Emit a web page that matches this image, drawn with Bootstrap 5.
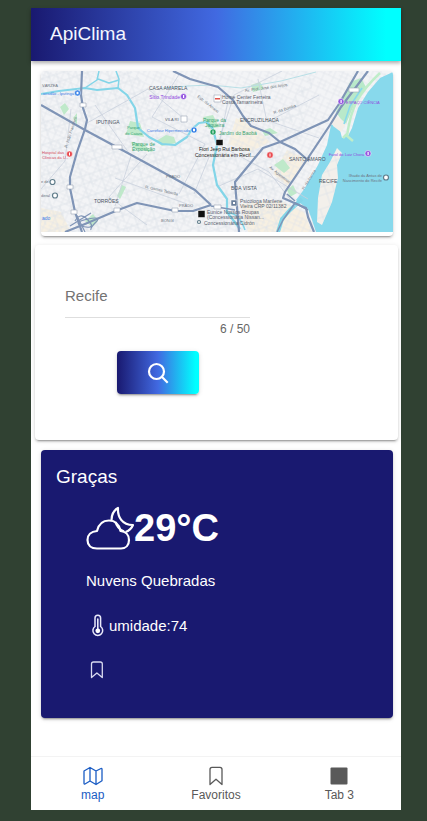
<!DOCTYPE html>
<html lang="pt-BR">
<head>
<meta charset="utf-8">
<meta name="viewport" content="width=device-width, initial-scale=1">
<title>ApiClima</title>
<link href="https://cdn.jsdelivr.net/npm/bootstrap@5.3.0/dist/css/bootstrap.min.css" rel="stylesheet">
<style>
:root{--night:#191970;--sweep:linear-gradient(90deg,#191970,#4169e1 50%,#00ffff 96%);--lift:0 3px 1px -2px rgba(0,0,0,.2),0 2px 2px rgba(0,0,0,.14),0 1px 5px rgba(0,0,0,.12)}
body{background:#304132;font-family:"Liberation Sans",Arial,sans-serif;font-size:15px;line-height:20px;color:#222}
.shell{min-height:100vh;padding:8px 26px 11px 31px}
.app-bar{background:var(--sweep);padding:16px 19px 17px;box-shadow:0 2px 4px rgba(0,0,0,.35);z-index:1}
.app-title{font-size:19px;line-height:20px;color:#f4f6ff}
.panel{border:0;border-radius:4px;box-shadow:var(--lift)}
.map-panel{margin:10px 8px 0 10px;padding-bottom:4px}
.map-panel svg{width:100%;height:auto;border-radius:4px 4px 0 0}
.search-panel{margin:9px 3px 0 4px;padding:38px 30px 46px}
.search-form{width:185px}
.city-input{border:0;border-bottom:1px solid #dedede;border-radius:0;padding:0 0 10px;height:35px;line-height:24px;font-size:15px;color:#737373;width:100%;background:transparent}
.counter{font-size:12px;line-height:16px;color:#666;margin-top:3px}
.search-btn{background:var(--sweep);width:82px;height:43px;padding:0;border:0;border-radius:4px;box-shadow:var(--lift);margin-top:14px}
.weather{background:var(--night);color:#fff;margin:10px 8px 0 10px;padding:16px 15px 38px}
.weather h2{font-size:19px;line-height:22px}
.details{padding-left:30px}
.temp{font-size:38px;line-height:48px}
.now{margin-top:16px}
.sky{margin-top:17px;line-height:24px}
.humid{margin-top:21px;line-height:24px}
.save{margin-top:22px;height:20px;line-height:1}
.tabs{border-top:1px solid #f3f3f3;padding:9px 0 7px}
.tabs a{color:#595959;font-size:12px;line-height:16px}
.tabs a.active{color:#1a5cc4}
.tabs svg{margin-bottom:1px}
</style>
<script src="https://cdn.jsdelivr.net/npm/bootstrap@5.3.0/dist/js/bootstrap.bundle.min.js"></script>
</head>
<body>
<div class="shell d-flex flex-column">
<div class="d-flex flex-column flex-grow-1 bg-white">
<header class="app-bar position-relative"><h1 class="app-title fw-normal m-0">ApiClima</h1></header>
<main class="flex-grow-1">
<section class="card panel map-panel" aria-label="Mapa do Recife">
<svg viewBox="41 71 352 161" role="img" aria-label="Mapa" font-family="Liberation Sans, Arial, sans-serif" font-size="5">
<defs>
<pattern id="streets" width="17" height="15" patternUnits="userSpaceOnUse" patternTransform="rotate(24)"><path d="M0 2H17M0 6H10M0 10H17M3 0V15M8 0V10M13 2V15" fill="none" stroke="#dfe3e9" stroke-width=".6"/></pattern>
<pattern id="blocks" width="19" height="21" patternUnits="userSpaceOnUse" patternTransform="rotate(-18)"><path d="M0 4H19M0 12H19M4 0V21M12 4V18" fill="none" stroke="#dde2e8" stroke-width=".7"/></pattern>
</defs>
<path fill="#f3f4f6" d="M41 71h352v161H41z"/>
<path fill="#f7f0e2" d="M41 208l20 4 10 20H41zM236 118l20 10 14 14-20 10-22-8zM240 204l40-4 24 12 8 20h-64zM287 150l22 10-22 26-14-12z"/>
<path fill="url(#streets)" d="M41 71h352v161H41z"/>
<path fill="url(#blocks)" d="M41 71h90l110 90 75-90-40 161H41z"/>
<g fill="#bfe9ca"><path d="M130 121l10 2 4 14-18-3zM156 141l10-6 8 2 2 6-14 3zM203 117l10-2 6 12-10 2zM251 85l9-3 4 7-11 3zM262 131l8-3 8 5-13 3zM274 165l9-6 7 9-6 5zM287 190l6-5 4 8-7 4zM117 196l5-11 4 2-6 12zM60 107l5-4 4 6-5 6zM131 142l12 2 10 8-19-3zM73 118l4-5v12zM85 221l8-7 5 7-6 6z"/></g>
<path fill="#88d9ec" d="M393 72l-13 6-12 14-10 16-6 20-4 8-6 2-2-8 4-4-7-2-6 1-4 20-9 20-13 23-9 12 12 9 4 11 4 12h77z"/>
<path fill="#b9e9ca" d="M350 82l11-4 5 9-12 18-8 19-6-6-4-6z"/>
<path fill="#f3eee8" d="M331 118l6-2 9 8-5 8-8-6z"/>
<path d="M380 73q-16 15-23 28t-10 35l6 5M343 138l4-4" fill="none" stroke="#bfedc9" stroke-width="2.500"/>
<path d="M362 88l-12 18-6 18" fill="none" stroke="#88d9ec" stroke-width="1.600"/>
<path fill="#f3f0eb" d="M337 148l5 5-5 12 1 13-6 24-10 23-5-3 1-24 4-23 8-13z"/>
<path fill="url(#blocks)" d="M337 148l5 5-5 12 1 13-6 24-10 23-5-3 1-24 4-23 8-13z"/>
<g fill="none" stroke="#83d5e8" stroke-width="2.200" stroke-linejoin="round"><path d="M41 94l18-3 26-3 12 2 21-2 9 7 8 13 3 20 11 9 13 7 13 1 12-8 5-8 7-6 8-1 6 7 4 16-4 20 4 20 10 14v13l13 17"/><path d="M85 88l12-8 2-9M116 71l3 8-1 9M98 79l11 4 10-3" stroke-width="1.500"/><path d="M163 88l24-2 24-1 30 3 40-7 35-9" stroke="#b8dfe6" stroke-width="1"/><path d="M278 232l4-13 8-9 12-11" stroke-width="4"/><path d="M227 213q12-1 18 17" stroke-width="1.500"/></g>
<g fill="none" stroke="#c9d1dd" stroke-width=".8"><path d="M180 73l-28 44 53 27-26 50M71 109l-6 52-24 28M95 105l36 51-16 50M87 123l61-34 34 28M147 154l-38 43 38 28M218 144l16-49 48-24M258 79l9 43 52-27M228 101l-9 44 50 27 27 35M269 121l50 17M219 186l39-17 50 30M115 178l72 26M209 157l-15 37"/></g>
<g fill="none" stroke="#7f94b6" stroke-width="2.200" stroke-linejoin="round"><path d="M82 71l-1 24 2 13 4 12-2 9-8 23-7 25v11l5 24 7 20"/><path d="M41 105l44 25 39 21 44 24 27 15 16 15"/><path d="M65 232l20-8 33-14 19-7 38 8h18l18-6"/><path d="M173 71l17 8 28 8 15 13 10 16 8 10 18 7 11 9 15 7 14 12"/><path d="M239 232l-4-50 28-34 17-6 48-22 11-16 19-33"/><path d="M368 71l-27 36-11 18-22 33-23 34-2 6 23 10 2 9 6 15"/><path d="M211 206l24 4M287 194l8 7M308 210l-13-7-12 17-6 12" stroke-width="1.500"/></g>
<path d="M75 221q5-9 12-2t3 8-10-2 8-6 8 3-5 8M70 226l21-13M76 214l9 18" fill="none" stroke="#7f94b6" stroke-width="1.200"/>
<g fill="#fff" stroke="#9aa5b5" stroke-width=".6"><path d="M80 103h6v4h-6zM112 145h10v4h-10zM67 185h6v4h-6zM71 210h6v4h-6zM114 208h6v4h-6zM172 208h6v4h-6zM214 205h7v4h-7zM349 88h10v4h-10zM181 116h6v6h-6zM214 95h7v7h-7z"/></g>
<g fill="#4c5563"><text x="149" y="89.500">CASA AMARELA</text><text x="96" y="123.500">IPUTINGA</text><text x="240" y="121.500">ENCRUZILHADA</text><text x="94" y="202.500">TORRÕES</text><text x="231" y="190">BOA VISTA</text><text x="289" y="161">SANTO AMARO</text><text x="319" y="183">RECIFE</text></g>
<g fill="#3d7be6"><text x="74" y="95" font-size="4" text-anchor="end">acadão - Iputinga</text><text x="190" y="132" font-size="4" text-anchor="end">Carrefour Hipermercado</text><text x="42" y="220">ado</text></g>
<g fill="#9149df"><text x="180" y="98.500" text-anchor="end">Sítio Trindade</text><text x="346" y="103.500" font-size="4">ESPAÇO CIÊNCIA</text><text x="364" y="155.500" font-size="4" text-anchor="end">Farol do Luiz Chora</text></g>
<g fill="#36a271"><text x="127" y="129" font-size="4">Parque</text><text x="125" y="135" font-size="4">do Caiara</text><text x="132" y="146">Parque de</text><text x="132" y="151">Exposição</text><text x="203" y="122">Parque da</text><text x="205" y="127">Jaqueira</text><text x="219" y="134.500">Jardim do Baobá</text></g>
<g fill="#d34d62" font-size="4"><text x="42" y="154">Hospital das</text><text x="42" y="159">Clínicas da U..</text></g>
<g fill="#59616e"><text x="165" y="121" font-size="4">VILA RI</text><text x="222" y="99">Home Center Ferreira</text><text x="222" y="104">Costa Tamarineira</text><text x="199" y="151" fill="#222">Fiori Jeep Rui Barbosa</text><text x="195" y="156.500" fill="#222">Concessionária em Recif...</text><text x="240" y="202.500">Psicóloga Marilene</text><text x="240" y="207.500">Vieira CRP 02/11382</text><text x="207" y="214">Eunice Nossos Roupas</text><text x="207" y="219">(Concessionária Nissan...</text><text x="204" y="225">Concessionária Cidrón</text></g>
<g fill="#6c7480" font-size="4"><text x="382" y="177" text-anchor="end">Ilhado da Antas de</text><text x="382" y="182" text-anchor="end">Nascimento do Recife</text><text x="41" y="183">e de</text><text x="41" y="197">deral</text><text x="179" y="207">PRADO</text><text x="161" y="222">BONGI</text><text x="166" y="178">PRADO</text><text x="42" y="87">VÁRZEA</text><text transform="translate(245 92) rotate(-8)">Av. Prof. José dos Anjos</text><text transform="translate(274 114) rotate(-18)">R. da Bomba</text><text transform="translate(197 97) rotate(38)">Estr. do Arraial</text><text transform="translate(145 188) rotate(13)">R. Gomes Taborda</text><text transform="translate(67 148) rotate(-72)">R. João Francisco</text><text transform="translate(269 168) rotate(38)">Av. Agamenon</text><text transform="translate(304 190) rotate(-58)">R. da Aurora</text></g>
<g stroke="#fff" stroke-width=".5"><circle cx="77.500" cy="93" r="3" fill="#317de5"/><circle cx="194" cy="130" r="3" fill="#317de5"/><circle cx="183.500" cy="96.500" r="3" fill="#9455df"/><circle cx="341" cy="101.500" r="3" fill="#9455df"/><circle cx="368" cy="153.500" r="3" fill="#9455df"/><circle cx="69.500" cy="154" r="3" fill="#e94b50"/><circle cx="270" cy="155" r="3.200" fill="#e94b50"/><circle cx="213" cy="132" r="3" fill="#23a060"/><path fill="#111" d="M216 139.500h7v6h-7zM198 210.500h7v7h-7z"/><path fill="#697f9b" d="M231 200h6v6h-6z"/></g>
<g fill="#fff" stroke="#607d8b" stroke-width="1.200"><circle cx="52.500" cy="182" r="2.500"/><circle cx="55" cy="195.500" r="2.500"/><circle cx="386" cy="177.500" r="2.500"/><circle cx="199" cy="222" r="1.500"/></g>
<path fill="#e0564f" d="M215 98h5v1.500h-5z"/>
<g fill="#fff"><path d="M76.500 91.800h2v2.500h-2zM193 128.800h2v2.500h-2zM183 95h1.200v3H183zM340.500 100h1.200v3h-1.200zM367.500 152h1.200v3h-1.200zM69 152.500h1v3h-1zM269.500 153.500h1v3h-1zM212.500 130.500h1v3h-1zM233 202h2v2h-2z"/></g>
</svg>
</section>
<section class="card panel search-panel">
<form class="search-form">
<input id="city" class="city-input d-block" type="text" maxlength="50" value="Recife" aria-label="Cidade" aria-describedby="city-count">
<div id="city-count" class="counter text-end">6 / 50</div>
<div class="d-flex"><button type="button" class="search-btn btn mx-auto d-flex align-items-center justify-content-center" aria-label="Buscar"><svg width="22" height="22" viewBox="0 0 22 22" fill="none" stroke="#fff" stroke-width="2.200"><circle cx="9.500" cy="9.500" r="7.500"/><path d="M14.800 14.800l5.900 5.900"/></svg></button></div>
</form>
</section>
<section class="card panel weather">
<h2 class="fw-normal m-0">Graças</h2>
<div class="details">
<div class="now d-flex align-items-center">
<svg width="48" height="48" viewBox="0 0 48 48" fill="none" stroke="#fff" stroke-width="2.200" stroke-linejoin="round"><path d="M11 44.500h24c5 0 8-3.500 8-8.500 0-5-3.500-8.500-8.500-9-1.500-7.500-5.500-10.500-11.500-10.500-6.500 0-10.500 4-12 10.500-6 .5-9.500 4-9.500 9s3.500 8.500 9.500 8.500z"/><path d="M25.500 16c0-5.500 2-9.500 6.500-12-.5 9 4 17 15 17-1.500 3.500-4 6-7.500 7M29.500 18c1 4 4 7.500 8.500 9.500"/></svg>
<strong class="temp">29°C</strong>
</div>
<div class="sky">Nuvens Quebradas</div>
<div class="humid d-flex align-items-center"><svg width="23" height="24" viewBox="0 0 23 24" fill="none" stroke="#e9e9fa" stroke-width="1.500"><path d="M9 12.500V4a2.800 2.800 0 0 1 5.600 0v8.500a4.900 4.900 0 1 1-5.600 0z"/><path d="M11.800 5v12" stroke-width="1.600" stroke-linecap="round"/><circle cx="11.800" cy="16.800" r="2.400" fill="#fff" stroke="none"/></svg><span>umidade:74</span></div>
<button type="button" class="save btn p-0 border-0 d-block" aria-label="Salvar nos favoritos"><svg class="d-block" width="22" height="20" viewBox="0 0 22 20" fill="none" stroke="#d9daf0" stroke-width="1.300" stroke-linejoin="round"><path d="M5.500 4c0-1.200.8-2 2-2h6.800c1.200 0 2 .8 2 2v13.500l-5.400-4.600-5.400 4.600z"/></svg></button>
</div>
</section>
</main>
<nav class="tabs row g-0 text-center" aria-label="Principal">
<a class="col active text-decoration-none" href="#map" aria-current="page"><svg class="d-block mx-auto" width="20" height="20" viewBox="0 0 20 20" fill="none" stroke="currentColor" stroke-width="1.300" stroke-linejoin="round"><path d="M7 1.500l6 3.500 5-2.500q1-.3 1 .7v11.500L13 18.500l-6-3.500-5 3q-1 .3-1-.7V5zM7 1.500V15M13 5v13.500"/></svg>map</a>
<a class="col text-decoration-none" href="#favoritos"><svg class="d-block mx-auto" width="20" height="20" viewBox="0 0 20 20" fill="none" stroke="currentColor" stroke-width="1.300" stroke-linejoin="round"><path d="M4 3.500C4 2 4.700 1.300 6 1.300h8c1.300 0 2 .7 2 2.200v15l-6-5.200-6 5.200z"/></svg>Favoritos</a>
<a class="col text-decoration-none" href="#tab3"><svg class="d-block mx-auto" width="20" height="20" viewBox="0 0 20 20"><rect x="1.500" y="1.500" width="17" height="17" rx="1" fill="currentColor"/></svg>Tab 3</a>
</nav>
</div>
</div>
</body>
</html>
